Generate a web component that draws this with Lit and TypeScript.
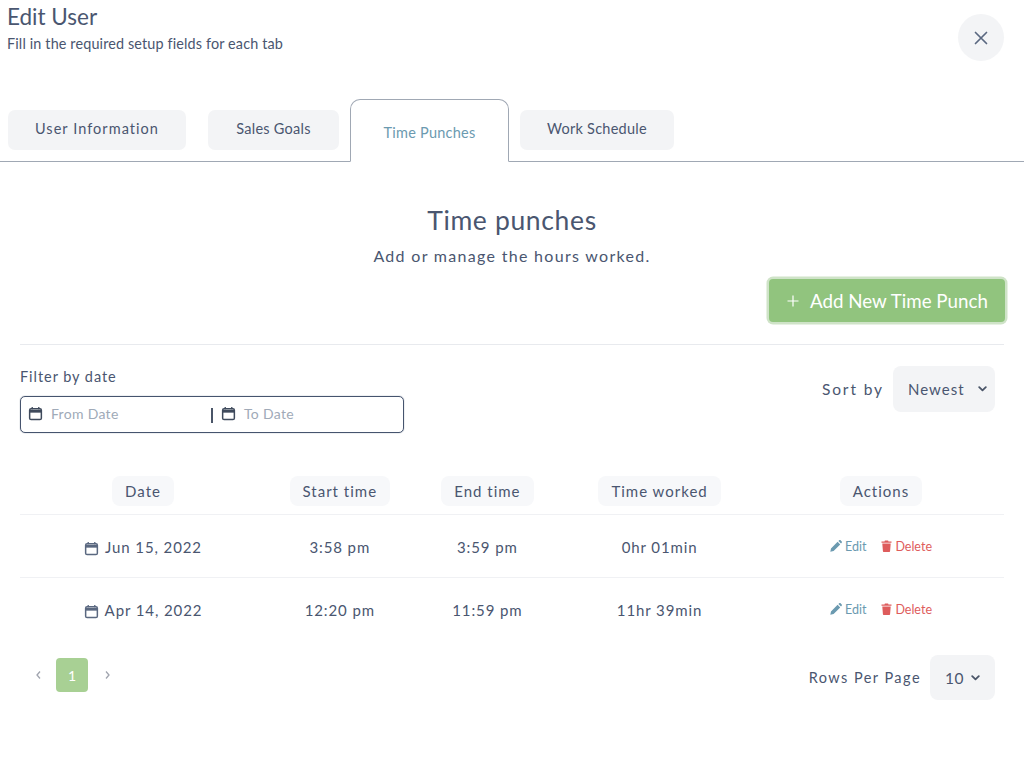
import { LitElement, html, css, svg } from "lit";
import { customElement } from "lit/decorators.js";

const cal = (size: number, color: string) => html`<svg class="cal" width=${size} height=${size} viewBox="0 0 16 16" fill="none" stroke=${color} stroke-width="1.6"><rect x="1.75" y="3" width="12.5" height="11.5" rx="1.5"/><path d="M1.75 5.6h12.5" stroke-width="3"/><path d="M4.5 1v2.5M11.5 1v2.5" stroke-width="1.4"/></svg>`;
const chev = html`<svg width="9" height="6" viewBox="0 0 9 6" fill="none" stroke="#4a5568" stroke-width="1.8" stroke-linecap="round" stroke-linejoin="round"><path d="M1.2 1.2 4.5 4.4 7.8 1.2"/></svg>`;
const pencil = html`<svg width="12" height="12" viewBox="0 0 12 12" fill="#6b9ab0">${svg`<path d="M0.3 11.7 1 8.4 7.6 1.8 10.2 4.4 3.6 11ZM8.4 1 9.2.3c.4-.4 1-.4 1.4 0l1.1 1.1c.4.4.4 1 0 1.4l-.7.8Z"/>`}</svg>`;
const trash = html`<svg width="11" height="12" viewBox="0 0 10 12" fill="#de5c5c">${svg`<path d="M0 1.4h3L3.4.4h3.2L7 1.4h3v1.3H0ZM.8 3.5h8.4l-.6 7.5c0 .5-.4 1-1 1H2.4c-.6 0-1-.5-1-1Z"/>`}</svg>`;

const rows = [
  { date: "Jun 15, 2022", start: "3:58 pm", end: "3:59 pm", worked: "0hr 01min" },
  { date: "Apr 14, 2022", start: "12:20 pm", end: "11:59 pm", worked: "11hr 39min" },
];

@customElement("app-root")
export class AppRoot extends LitElement {
  static styles = css`
    :host { display: block; width: 1024px; height: 769px; background: #fff; overflow: hidden; font-family: "Lato", "Noto Sans", sans-serif; color: #4a5670; }
    .header { display: flex; justify-content: space-between; padding: 5px 20px 0 7px; height: 99px; box-sizing: border-box; }
    h1 { margin: 0; font-size: 22.5px; line-height: 24px; font-weight: 400; }
    .sub { margin: 6px 0 0; font-size: 14.4px; line-height: 18px; letter-spacing: 0.14px; }
    .close { width: 46px; height: 47px; border-radius: 50%; background: #f3f4f6; display: flex; align-items: center; justify-content: center; margin-top: 9px; }
    .tabs { display: flex; align-items: flex-start; height: 63px; box-sizing: border-box; border-bottom: 1px solid #a0a8b4; padding-left: 8px; }
    .tab { height: 40px; margin-top: 11px; display: flex; align-items: center; justify-content: center; padding-bottom: 3px; box-sizing: border-box; background: #f3f4f6; border-radius: 7px; font-size: 14.5px; letter-spacing: 0.25px; }
    .t1 { width: 178px; letter-spacing: 1.05px; margin-right: 22px; }
    .t2 { width: 131px; margin-right: 11px; }
    .t3 { width: 159px; height: 63px; margin: 0 11px 0 0; padding: 4px 0 0; background: #fff; border: 1px solid #a0a8b4; border-bottom: 1px solid #fff; border-radius: 10px 10px 0 0; color: #6b9ab0; }
    .t4 { width: 154px; }
    .intro { text-align: center; padding-top: 43px; }
    h2 { margin: 0; font-size: 26.5px; line-height: 30px; font-weight: 400; letter-spacing: 0.65px; }
    .intro p { margin: 11px 0 0; font-size: 16px; line-height: 20px; letter-spacing: 1.3px; }
    .actions { display: flex; justify-content: flex-end; padding: 13px 19px 0 0; }
    .add { width: 236px; height: 43px; border-radius: 4px; background: #91c47e; box-shadow: 0 0 0 2.5px #cfe3c8; color: #fff; font-size: 18.75px; display: flex; align-items: center; gap: 11px; padding-left: 18px; box-sizing: border-box; white-space: nowrap; }
    .body { margin: 0 20px; }
    .filters { border-top: 1px solid #e8eaee; margin-top: 22px; display: flex; justify-content: space-between; height: 131px; }
    .flabel { font-size: 14.5px; line-height: 18px; letter-spacing: 0.95px; margin-top: 23px; }
    .range { width: 384px; height: 37px; margin-top: 10px; box-sizing: border-box; border: 1px solid #46546e; box-shadow: 0 0 1px #56647c; border-radius: 5px; display: flex; align-items: center; padding: 0 0 2px 7px; font-size: 14px; color: #a0aab8; letter-spacing: 0.3px; }
    .range span { margin-left: 8px; }
    .from { width: 183px; display: flex; align-items: center; }
    .bar { width: 2px; height: 15px; background: #4a5568; margin-right: 8px; margin-top: 3px; }
    .to { display: flex; align-items: center; }
    .sort { display: flex; align-items: flex-start; gap: 9px; margin: 21px 9px 0 0; }
    .sort label { font-size: 15.5px; line-height: 46px; letter-spacing: 1.9px; }
    .select { background: #f3f4f6; border-radius: 8px; height: 46px; display: flex; align-items: center; justify-content: space-between; box-sizing: border-box; font-size: 15px; }
    .s1 { width: 102px; padding: 0 8px 0 15px; letter-spacing: 1px; }
    .s2 { width: 65px; height: 45px; padding: 0 15px; letter-spacing: 0.6px; font-size: 15.5px; }
    .row { display: grid; grid-template-columns: 25% 15% 15% 20% 25%; align-items: center; justify-items: center; border-bottom: 1px solid #f0f1f4; height: 63px; padding-top: 1px; box-sizing: border-box; font-size: 15px; letter-spacing: 0.9px; }
    .row:nth-last-child(2) { border-bottom-color: transparent; }
    .head { height: 39px; padding-top: 0; align-items: start; }
    .chip { background: #f7f8fa; border-radius: 8px; height: 30px; line-height: 30px; padding: 0 13px; letter-spacing: 1px; font-size: 15px; }
    .date { display: flex; align-items: center; gap: 6px; }
    .date .cal { margin-top: 3px; }
    .acts { display: flex; align-items: center; font-size: 12.5px; letter-spacing: 0; margin-top: -1px; }
    .edit { color: #6b9ab0; display: flex; align-items: center; gap: 3px; margin-right: 15px; }
    .del { color: #de5c5c; display: flex; align-items: center; gap: 3px; }
    .foot { display: flex; justify-content: space-between; align-items: flex-start; margin-top: 14px; }
    .pages { display: flex; align-items: center; margin: 3px 0 0 15px; color: #a0a4ae; font-size: 14px; }
    .pages svg { display: block; }
    .one { width: 32px; height: 34px; background: #a8d094; color: #fff; border-radius: 4px; display: flex; align-items: center; justify-content: center; margin: 0 16px 0 14px; font-size: 14px; }
    .rpp { display: flex; align-items: center; gap: 9px; margin-right: 9px; font-size: 14.5px; letter-spacing: 1.45px; }
  `;

  render() {
    return html`
      <div class="header">
        <div>
          <h1>Edit User</h1>
          <p class="sub">Fill in the required setup fields for each tab</p>
        </div>
        <div class="close">
          <svg width="14" height="14" viewBox="0 0 14 14" stroke="#5a6880" stroke-width="1.7" stroke-linecap="round"><path d="M1.5 1.5 12.5 12.5M12.5 1.5 1.5 12.5"/></svg>
        </div>
      </div>
      <div class="tabs">
        <div class="tab t1">User Information</div>
        <div class="tab t2">Sales Goals</div>
        <div class="tab t3">Time Punches</div>
        <div class="tab t4">Work Schedule</div>
      </div>
      <div class="intro">
        <h2>Time punches</h2>
        <p>Add or manage the hours worked.</p>
      </div>
      <div class="actions">
        <div class="add">
          <svg width="12" height="12" viewBox="0 0 12 12" stroke="#fff" stroke-width="1.2"><path d="M6 .5v11M.5 6h11"/></svg>
          <span>Add New Time Punch</span>
        </div>
      </div>
      <div class="body">
        <div class="filters">
          <div>
            <div class="flabel">Filter by date</div>
            <div class="range">
              <div class="from">${cal(15, "#3f4a5c")}<span>From Date</span></div>
              <div class="bar"></div>
              <div class="to">${cal(15, "#3f4a5c")}<span>To Date</span></div>
            </div>
          </div>
          <div class="sort">
            <label>Sort by</label>
            <div class="select s1"><span>Newest</span>${chev}</div>
          </div>
        </div>
        <div class="row head">
          <div class="chip">Date</div>
          <div class="chip">Start time</div>
          <div class="chip">End time</div>
          <div class="chip">Time worked</div>
          <div class="chip">Actions</div>
        </div>
        ${rows.map((r) => html`
          <div class="row">
            <div class="date">${cal(15, "#5a6880")}<span>${r.date}</span></div>
            <div>${r.start}</div>
            <div>${r.end}</div>
            <div>${r.worked}</div>
            <div class="acts">
              <div class="edit">${pencil}<span>Edit</span></div>
              <div class="del">${trash}<span>Delete</span></div>
            </div>
          </div>`)}
        <div class="foot">
          <div class="pages">
            <svg width="7" height="10" viewBox="0 0 7 10" fill="none" stroke="#a0a4ae" stroke-width="1.3"><path d="M5 1.5 2 5l3 3.5"/></svg>
            <div class="one">1</div>
            <svg width="7" height="10" viewBox="0 0 7 10" fill="none" stroke="#a0a4ae" stroke-width="1.3"><path d="M2 1.5 5 5 2 8.5"/></svg>
          </div>
          <div class="rpp">
            <span>Rows Per Page</span>
            <div class="select s2"><span>10</span>${chev}</div>
          </div>
        </div>
      </div>
    `;
  }
}
